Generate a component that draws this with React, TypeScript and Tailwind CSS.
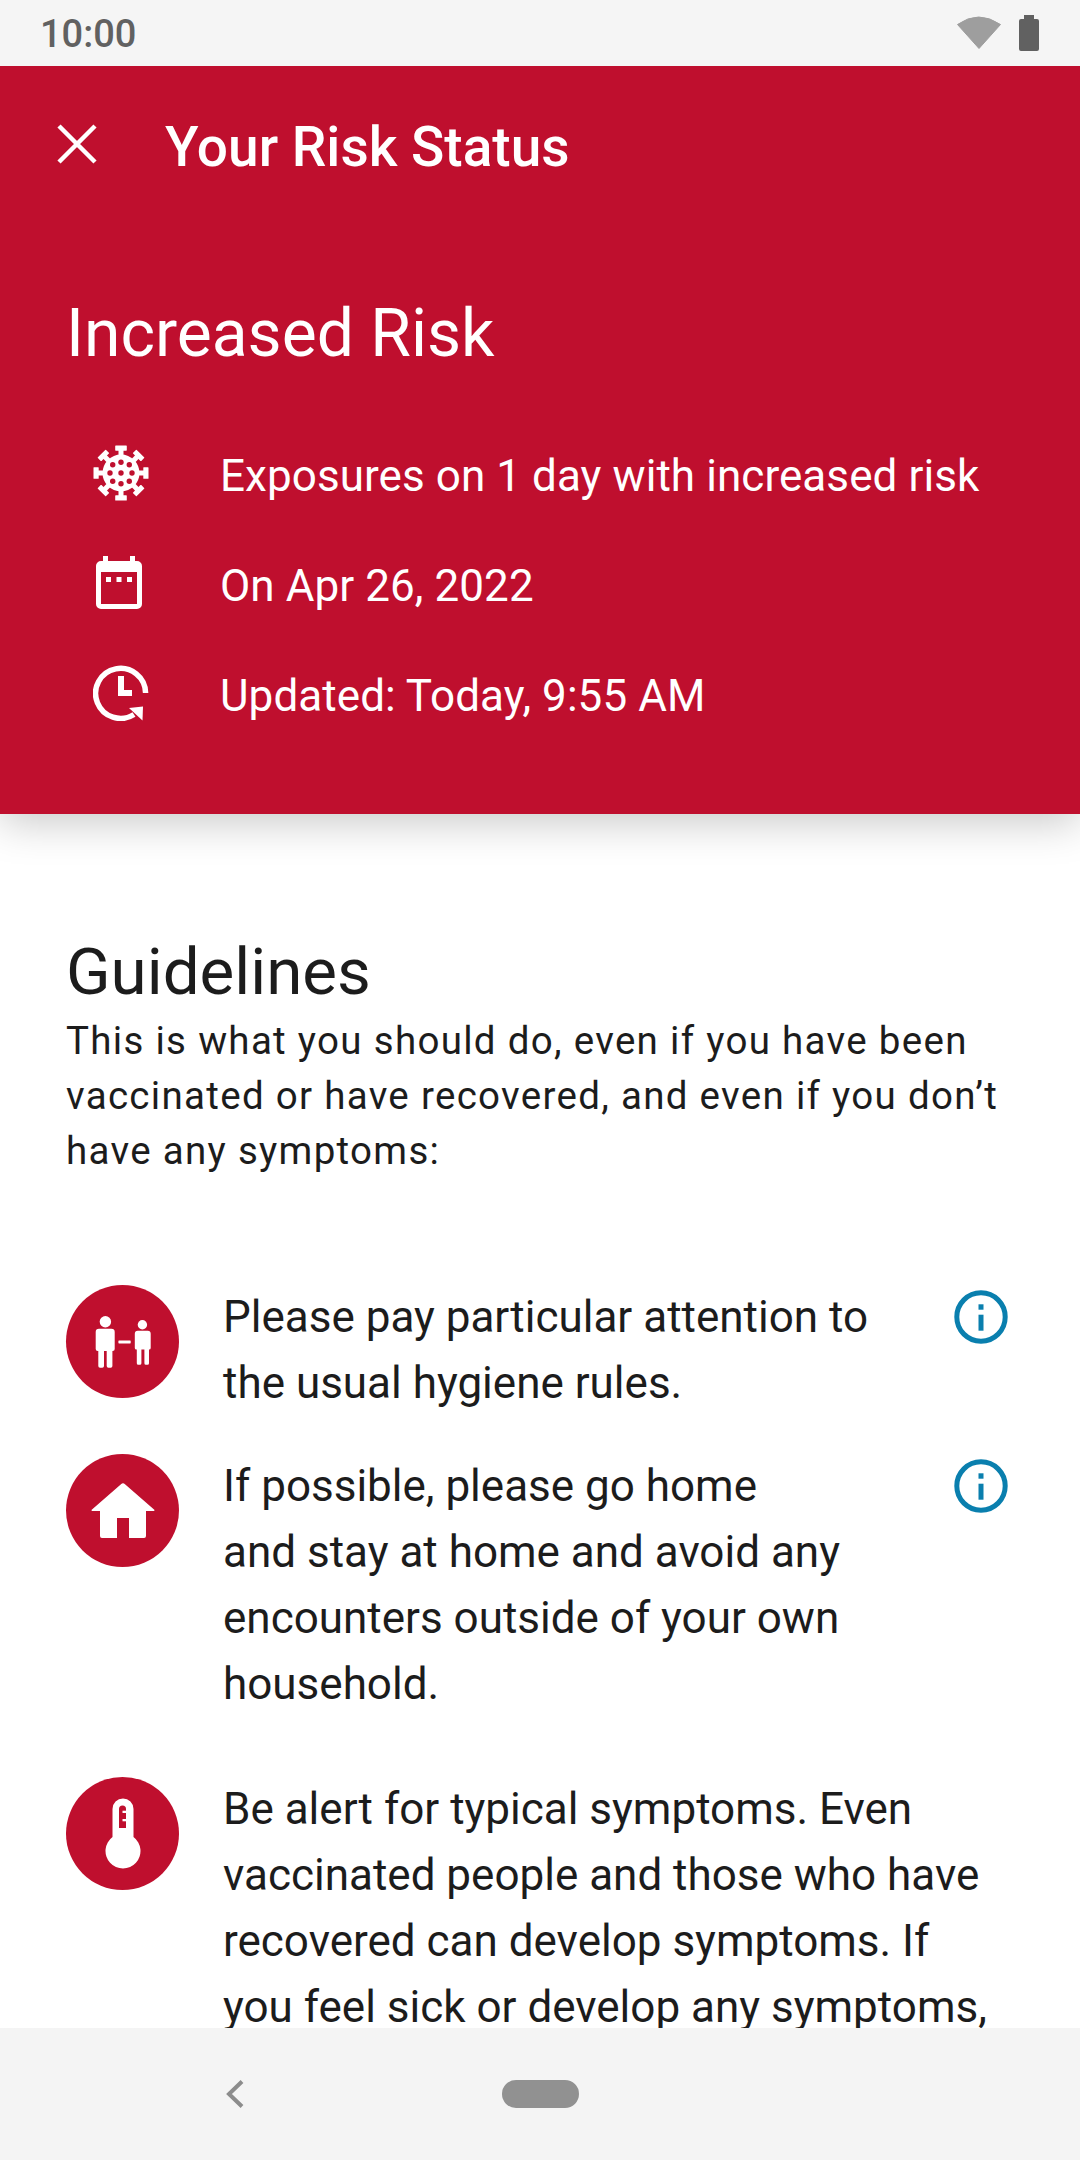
import React from "react";

const Info = () => (
  <svg width="56" height="56" viewBox="0 0 56 56" className="shrink-0">
    <circle cx="28" cy="28" r="24.2" fill="none" stroke="#0a7fae" strokeWidth="5" />
    <rect x="25.5" y="15.3" width="5" height="5.4" fill="#0a7fae" />
    <rect x="25.5" y="25.7" width="5" height="16" fill="#0a7fae" />
  </svg>
);

const Circle = ({ children }: { children: React.ReactNode }) => (
  <div className="w-[113px] h-[113px] rounded-full bg-[#bf0f2e] shrink-0 flex items-center justify-center">{children}</div>
);

const Virus = () => {
  const spikes = [0, 45, 90, 135, 180, 225, 270, 315];
  const dots: [number, number][] = [[28, 28], [28, 17.2], [28, 38.8], [17, 28], [39, 28], [19.7, 19.7], [36.3, 19.7], [19.7, 36.3], [36.3, 36.3]];
  return (
    <svg width="56" height="56" viewBox="0 0 56 56">
      {spikes.map((a) => (
        <g key={a} transform={`rotate(${a} 28 28)`} fill="#fff">
          <rect x="25.5" y="3" width="5" height="10" />
          <rect x="22.2" y="0.5" width="11.6" height="5.2" rx="0.6" />
        </g>
      ))}
      <circle cx="28" cy="28" r="18.5" fill="#fff" />
      {dots.map(([x, y], i) => (
        <circle key={i} cx={x} cy={y} r="2.7" fill="#bf0f2e" />
      ))}
    </svg>
  );
};

const Calendar = () => (
  <svg width="56" height="56" viewBox="0 0 56 56">
    <g transform="translate(-2 -1)">
      <path fill="#fff" fillRule="evenodd" d="M12 2h5v5h22V2h5v5h2a5 5 0 0 1 5 5v38a5 5 0 0 1-5 5H10a5 5 0 0 1-5-5V12a5 5 0 0 1 5-5h2V2zM10 18v32h36V18H10z" />
      <rect x="15" y="23" width="5" height="5" fill="#fff" />
      <rect x="25.5" y="23" width="5" height="5" fill="#fff" />
      <rect x="36" y="23" width="5" height="5" fill="#fff" />
    </g>
  </svg>
);

const Clock = () => (
  <svg width="56" height="56" viewBox="0 0 56 56">
    <path d="M52.600 28A25 25 0 1 0 41 49.500" fill="none" stroke="#fff" strokeWidth="5.5" />
    <path d="M36 43L50 41.500L49.500 55.500Z" fill="#fff" />
    <path d="M25 11h6v14h8v6H25z" fill="#fff" />
  </svg>
);

const People = () => (
  <svg width="60" height="60" viewBox="0 0 60 60">
    <g fill="#fff">
      <circle cx="12.4" cy="9.7" r="5.7" />
      <path d="M6 16.7h12.400a3.300 3.300 0 0 1 3.300 3.300V37a2 2 0 0 1-2 2h-.3V54a1.700 1.700 0 0 1-1.700 1.700h-2.300a1.700 1.700 0 0 1-1.700-1.700V39h-2.700V54a1.700 1.700 0 0 1-1.700 1.700H7a1.700 1.700 0 0 1-1.700-1.700V39h-.6a2 2 0 0 1-2-2V20A3.300 3.300 0 0 1 6 16.700z" />
      <rect x="25.4" y="28.4" width="12.3" height="3" rx="0.6" />
      <circle cx="49.4" cy="12.7" r="4.7" />
      <path d="M44.700 18.700h10a3 3 0 0 1 3 3V36a1.600 1.600 0 0 1-1.600 1.600H56V51.200a1.500 1.500 0 0 1-1.500 1.500h-1.600a1.500 1.500 0 0 1-1.500-1.500V37.600h-3V51.200a1.500 1.500 0 0 1-1.500 1.500h-1.600a1.500 1.500 0 0 1-1.500-1.500V37.600h-.4a1.600 1.600 0 0 1-1.600-1.600V21.700a3 3 0 0 1 3-3z" />
    </g>
  </svg>
);

const Home = () => (
  <svg width="64" height="56" viewBox="0 0 64 56">
    <path fill="#fff" d="M30 1.200a3 3 0 0 1 4 0L63 26.500a.8.8 0 0 1-.5 1.500H55v25a2 2 0 0 1-2 2H38V35H26v20H11a2 2 0 0 1-2-2V28H1.500a.8.8 0 0 1-.5-1.500z" />
  </svg>
);

const Thermo = () => (
  <svg width="36" height="71" viewBox="0 0 36 71">
    <path fill="#fff" d="M7.500 11a10.500 10.500 0 0 1 21 0v28a17.500 17.500 0 1 1-21 0z" />
    <path fill="#bf0f2e" d="M14 11a3.500 3.500 0 0 1 7 0v19h-7z" />
    <rect x="17.5" y="12.700" width="3.500" height="2.300" fill="#fff" />
    <rect x="17.5" y="21" width="3.500" height="2.300" fill="#fff" />
  </svg>
);

const Row = ({ icon, text }: { icon: React.ReactNode; text: string }) => (
  <div className="flex items-center h-[110px]">
    <div className="w-[56px] h-[56px] ml-[93px] -mt-[6px] flex items-center justify-center shrink-0">{icon}</div>
    <div className="ml-[71px] text-[44px] leading-[56px] tracking-[0.07px] text-white">{text}</div>
  </div>
);

export default function App() {
  return (
    <div className="w-[1080px] h-[2160px] overflow-hidden flex flex-col bg-white font-['Roboto',sans-serif]">
      <div className="relative z-20 h-[66px] shrink-0 bg-[#f5f5f5] flex items-center justify-between pl-[40px] pr-[41px]">
        <span className="text-[38px] leading-[36px] font-medium text-[#616161] mt-[2px]">10:00</span>
        <div className="flex items-center gap-[18px]">
          <svg width="44" height="34" viewBox="0 0 44 34" className="-mt-[3px]">
            <path d="M0.5 9.500Q21.500 -5.500 43.500 9.500L22 33.500Z" fill="#9e9e9e" strokeLinejoin="round" stroke="#9e9e9e" strokeWidth="1" />
          </svg>
          <svg width="20" height="36" viewBox="0 0 20 36">
            <path d="M5 0h10v4h3a2 2 0 0 1 2 2v28a2 2 0 0 1-2 2H2a2 2 0 0 1-2-2V6a2 2 0 0 1 2-2h3z" fill="#616161" />
          </svg>
        </div>
      </div>

      <div className="relative z-10 shrink-0 h-[748px] bg-[#bf0f2e] shadow-[0_8px_40px_rgba(0,0,0,0.22)]">
        <div className="flex items-center h-[80px] mt-[41px]">
          <svg width="40" height="40" viewBox="0 0 40 40" className="ml-[57px] -mt-[6px] shrink-0">
            <path d="M2 2L38 38M38 2L2 38" stroke="#fff" strokeWidth="4.5" fill="none" />
          </svg>
          <h1 className="ml-[68px] text-[55px] leading-[60px] font-medium text-white">Your Risk Status</h1>
        </div>
        <div className="pl-[66px] mt-[109px] text-[66px] leading-[76px] text-white">Increased Risk</div>
        <div className="mt-[49px]">
          <Row icon={<Virus />} text="Exposures on 1 day with increased risk" />
          <Row icon={<Calendar />} text="On Apr 26, 2022" />
          <Row icon={<Clock />} text="Updated: Today, 9:55 AM" />
        </div>
      </div>

      <div className="flex-1 min-h-0 overflow-hidden pt-[122px] px-[66px]">
        <h2 className="text-[65.5px] leading-[72px] text-[#1c1c1c]">Guidelines</h2>
        <p className="mt-[5px] text-[38.5px] leading-[55px] tracking-[1.3px] text-[#1c1c1c] w-[950px]">
          This is what you should do, even if you have been vaccinated or have recovered, and even if you don’t have any symptoms:
        </p>
        <div className="mt-[107px] flex items-start">
          <Circle><People /></Circle>
          <p className="ml-[44px] w-[660px] text-[44px] leading-[66px] text-[#1c1c1c] -mt-[1px]">Please pay particular attention to the usual hygiene rules.</p>
          <div className="ml-[70px] mt-[4px]"><Info /></div>
        </div>
        <div className="mt-[38px] flex items-start">
          <Circle><Home /></Circle>
          <p className="ml-[44px] w-[660px] text-[44px] leading-[66px] text-[#1c1c1c] -mt-[1px]">If possible, please go home<br />and stay at home and avoid any encounters outside of your own household.</p>
          <div className="ml-[70px] mt-[4px]"><Info /></div>
        </div>
        <div className="mt-[60px] flex items-start">
          <Circle><Thermo /></Circle>
          <p className="ml-[44px] w-[780px] text-[44px] leading-[66px] text-[#1c1c1c] -mt-[1px]">Be alert for typical symptoms. Even vaccinated people and those who have recovered can develop symptoms. If you feel sick or develop any symptoms,</p>
        </div>
      </div>

      <div className="relative z-10 h-[132px] shrink-0 bg-[#f4f4f4] flex items-center">
        <svg width="20" height="30" viewBox="0 0 20 30" className="ml-[225px]">
          <path d="M17 2.5L4 15L17 27.5" fill="none" stroke="#8c8c8c" strokeWidth="4" />
        </svg>
        <div className="ml-[257px] w-[77px] h-[28px] rounded-full bg-[#919191]" />
      </div>
    </div>
  );
}
